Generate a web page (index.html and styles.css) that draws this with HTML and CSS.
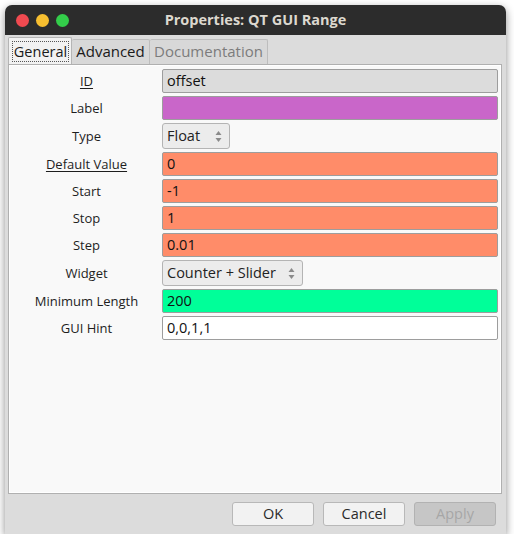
FILE: index.html
```html
<!DOCTYPE html>
<html>
<head>
<meta charset="utf-8">
<title>Properties: QT GUI Range</title>
<link rel="stylesheet" href="styles.css">
</head>
<body>
<div class="window">
  <div class="titlebar">
    <div class="lights">
      <span class="light red"></span>
      <span class="light yellow"></span>
      <span class="light green"></span>
    </div>
    <div class="title">Properties: QT GUI Range</div>
  </div>
  <div class="body">
    <div class="tabs">
      <div class="tab active"><span class="focus">General</span></div>
      <div class="tab adv">Advanced</div>
      <div class="tab disabled">Documentation</div>
    </div>
    <div class="pane">
      <div class="form">
        <div class="lbl"><u>ID</u></div>
        <div class="field grey">offset</div>

        <div class="lbl">Label</div>
        <div class="field purple"></div>

        <div class="lbl">Type</div>
        <div class="combo type">Float<span class="spin"><svg width="7" height="13" viewBox="0 0 7 13"><path d="M3.5 1 L6.5 5 L0.5 5 Z" fill="#8a8a8a"/><path d="M3.5 12 L6.5 8 L0.5 8 Z" fill="#8a8a8a"/></svg></span></div>

        <div class="lbl"><u>Default Value</u></div>
        <div class="field orange">0</div>

        <div class="lbl">Start</div>
        <div class="field orange">-1</div>

        <div class="lbl">Stop</div>
        <div class="field orange">1</div>

        <div class="lbl">Step</div>
        <div class="field orange">0.01</div>

        <div class="lbl">Widget</div>
        <div class="combo widget">Counter + Slider<span class="spin"><svg width="7" height="13" viewBox="0 0 7 13"><path d="M3.5 1 L6.5 5 L0.5 5 Z" fill="#8a8a8a"/><path d="M3.5 12 L6.5 8 L0.5 8 Z" fill="#8a8a8a"/></svg></span></div>

        <div class="lbl">Minimum Length</div>
        <div class="field mint">200</div>

        <div class="lbl">GUI Hint</div>
        <div class="field white">0,0,1,1</div>
      </div>
    </div>
    <div class="buttons">
      <div class="btn">OK</div>
      <div class="btn">Cancel</div>
      <div class="btn off">Apply</div>
    </div>
  </div>
</div>
</body>
</html>
```

FILE: styles.css
```css
html, body {
  margin: 0;
  padding: 0;
  background: #ffffff;
}
body {
  font-family: "Open Sans", "DejaVu Sans", sans-serif;
  color: #1e1e1e;
  padding: 5px 0 0 5px;
}
.window {
  width: 501px;
  height: 529px;
  border-radius: 7px 7px 0 0;
  box-shadow: 0 3px 8px rgba(0,0,0,0.45);
  background: #dcdcdc;
  display: flex;
  flex-direction: column;
  overflow: hidden;
}
.titlebar {
  height: 30px;
  background: #2c2c2c;
  display: flex;
  align-items: center;
  position: relative;
  flex: none;
}
.lights {
  display: flex;
  gap: 7px;
  padding-left: 11px;
}
.light {
  width: 13px;
  height: 13px;
  border-radius: 50%;
  display: block;
}
.red { background: #f04a50; }
.yellow { background: #f7bf30; }
.green { background: #33cd4a; }
.title {
  position: absolute;
  left: 0;
  right: 0;
  text-align: center;
  color: #dcd8cf;
  font-weight: bold;
  font-size: 14.5px;
  top: 5px;
}
.body {
  flex: 1;
  display: flex;
  flex-direction: column;
  padding: 2px 4px 8px 3px;
}
.tabs {
  display: flex;
  align-items: flex-end;
  height: 27px;
  flex: none;
}
.tab {
  height: 25px;
  box-sizing: border-box;
  border: 1px solid #bdbdbd;
  border-bottom: none;
  border-radius: 2px 2px 0 0;
  background: #d8d8d8;
  font-size: 15px;
  line-height: 23px;
  padding: 0;
  text-align: center;
  color: #1a1a1a;
  white-space: nowrap;
}
.tab + .tab {
  border-left: none;
}
.tab.active {
  width: 64px;
  height: 27px;
  background: #f2f2f2;
  padding: 3px 2px 0 3px;
  border-color: #b5b5b5;
  border-right: 1px solid #b5b5b5;
  font-size: 14.5px;
}
.tab.adv {
  width: 78px;
}
.tab.disabled {
  width: 118px;
  color: #7c7c7c;
}
.focus {
  display: block;
  border: 1px dotted #555;
  line-height: 19px;
  padding: 0;
}
.pane {
  height: 430px;
  box-sizing: border-box;
  border: 1px solid #b0b0b0;
  box-shadow: inset 0 0 0 1px #ffffff;
  background: #f9f9f9;
  flex: none;
  padding: 4px 3px 0 2px;
}
.form {
  display: grid;
  grid-template-columns: 151px 1fr;
  row-gap: 3px;
  align-items: center;
}
.lbl {
  text-align: center;
  font-size: 13px;
  color: #1e1e1e;
}
.lbl u {
  text-underline-offset: 2px;
}
.field {
  height: 24px;
  box-sizing: border-box;
  border: 1px solid #9d9d9d;
  border-radius: 2px;
  font-size: 14.5px;
  line-height: 22px;
  padding-left: 4px;
  color: #111;
}
.grey { background: #dcdcdc; }
.purple { background: #c966c9; }
.orange { background: #ff8c69; }
.mint { background: #00ff99; }
.white { background: #ffffff; }
.combo {
  height: 26px;
  box-sizing: border-box;
  border: 1px solid #b4b4b4;
  border-radius: 3px;
  background: #ececec;
  font-size: 14.5px;
  line-height: 24px;
  padding-left: 4px;
  display: flex;
  align-items: center;
  justify-content: space-between;
  color: #222;
}
.combo.type { width: 68px; }
.combo.widget { width: 141px; }
.spin {
  display: flex;
  padding-right: 7px;
}
.spin svg { display: block; }
.buttons {
  display: flex;
  justify-content: flex-end;
  gap: 9px;
  margin-top: 8px;
  padding-right: 6px;
}
.btn {
  width: 82px;
  height: 24px;
  box-sizing: border-box;
  border: 1px solid #b8b8b8;
  border-radius: 3px;
  background: #f2f2f2;
  text-align: center;
  font-size: 14.5px;
  line-height: 22px;
  color: #2a2a2a;
}
.btn.off {
  background: #c6c6c6;
  border-color: #b2b2b2;
  color: #a6a6a6;
}
```
